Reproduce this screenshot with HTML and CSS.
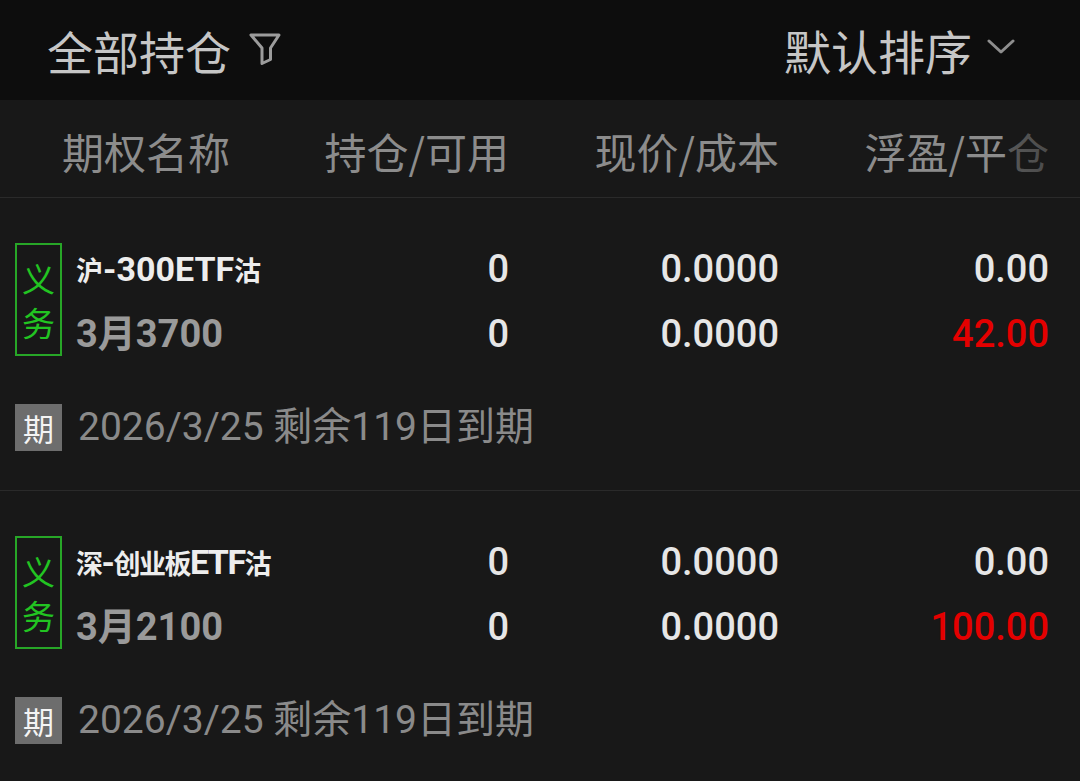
FILE: index.html
```html
<!DOCTYPE html>
<html lang="zh-CN">
<head>
<meta charset="utf-8">
<title>全部持仓</title>
<link rel="stylesheet" href="styles.css">
</head>
<body>
<header class="topbar">
  <div class="filter">
    <span class="title">全部持仓</span>
    <svg class="funnel" width="34" height="34" viewBox="10 10 34 34"><path d="M13 14 H41 L32.5 27 V38.5 L24 42.5 V27 Z" fill="none" stroke="#9c9c9c" stroke-width="3" stroke-linejoin="round"/></svg>
  </div>
  <div class="sort">
    <span class="title">默认排序</span>
    <svg class="chev" width="28" height="20" viewBox="0 0 28 20"><path d="M2 4 L14 15 L26 4" fill="none" stroke="#8e8e8e" stroke-width="3" stroke-linecap="round" stroke-linejoin="round"/></svg>
  </div>
</header>

<div class="colhead">
  <div class="ch first">期权名称</div>
  <div class="ch">持仓/可用</div>
  <div class="ch">现价/成本</div>
  <div class="ch">浮盈/平仓</div>
  <div class="fade"></div>
</div>

<section class="pos">
  <div class="main">
    <div class="namecell">
      <div class="tag"><span>义</span><span>务</span></div>
      <div class="names">
        <div class="n1"><span class="cj">沪</span>-300ETF<span class="cj">沽</span></div>
        <div class="n2">3月3700</div>
      </div>
    </div>
    <div class="num">0</div>
    <div class="num">0.0000</div>
    <div class="num">0.00</div>
    <div class="num">0</div>
    <div class="num">0.0000</div>
    <div class="num red">42.00</div>
  </div>
  <div class="expiry">
    <span class="qi">期</span>
    <span class="exp-text">2026/3/25 剩余119日到期</span>
  </div>
</section>

<section class="pos">
  <div class="main">
    <div class="namecell">
      <div class="tag"><span>义</span><span>务</span></div>
      <div class="names">
        <div class="n1 tight"><span class="cj">深</span>-<span class="cj">创业板</span>ETF<span class="cj">沽</span></div>
        <div class="n2">3月2100</div>
      </div>
    </div>
    <div class="num">0</div>
    <div class="num">0.0000</div>
    <div class="num">0.00</div>
    <div class="num">0</div>
    <div class="num">0.0000</div>
    <div class="num red">100.00</div>
  </div>
  <div class="expiry">
    <span class="qi">期</span>
    <span class="exp-text">2026/3/25 剩余119日到期</span>
  </div>
</section>
</body>
</html>
```

FILE: styles.css
```css
html, body {
  margin: 0;
  padding: 0;
  background: #181818;
  height: 781px;
  overflow: hidden;
  font-family: Roboto, "Noto Sans CJK SC", sans-serif;
}

.topbar {
  height: 100px;
  background: #0d0d0d;
  display: flex;
  align-items: center;
  justify-content: space-between;
  padding: 0 65px 0 47px;
  box-sizing: border-box;
}

.filter, .sort {
  display: flex;
  align-items: center;
}

.title {
  font-family: "Noto Sans CJK SC", sans-serif;
  font-size: 46px;
  line-height: 60px;
  color: #c6c6c6;
}

.sort .title {
  font-size: 47px;
}

.funnel {
  margin-left: 17px;
  margin-top: -4px;
}

.chev {
  margin-left: 15px;
  margin-top: -6px;
}

.colhead {
  position: relative;
  height: 97px;
  display: grid;
  grid-template-columns: 224px 270px 270px 270px;
  padding: 0 31px 0 15px;
  align-items: center;
  border-bottom: 1px solid #2a2a2a;
}

.ch {
  font-family: "Noto Sans CJK SC", sans-serif;
  font-size: 42px;
  line-height: 50px;
  color: #8c8c8c;
  text-align: right;
  white-space: nowrap;
  margin-top: 4px;
}

.ch.first {
  text-align: left;
  padding-left: 47px;
}

.fade {
  position: absolute;
  top: 0;
  right: 0;
  width: 72px;
  height: 100%;
  background: linear-gradient(to right, rgba(24,24,24,0.45), rgba(24,24,24,0.65));
}

.pos {
  padding: 45px 31px 0 15px;
  height: 293px;
  box-sizing: border-box;
  border-bottom: 1px solid #2a2a2a;
}

.main {
  display: grid;
  grid-template-columns: 224px 270px 270px 270px;
  grid-template-rows: 65px 65px;
}

.namecell {
  grid-row: span 2;
  display: flex;
  align-items: flex-start;
  white-space: nowrap;
}

.tag {
  flex-shrink: 0;
  width: 47px;
  height: 113px;
  box-sizing: border-box;
  border: 2px solid #27a627;
  display: flex;
  flex-direction: column;
  align-items: center;
  justify-content: center;
  gap: 8px;
  font-family: "Noto Sans CJK SC", sans-serif;
  font-size: 33px;
  line-height: 36px;
  color: #22c422;
}

.names {
  flex-shrink: 0;
  margin-left: 14px;
}

.n1, .n2 {
  height: 65px;
  line-height: 52px;
  font-weight: 700;
}

.n1 {
  font-size: 34px;
  color: #ededed;
}

.n1 .cj {
  font-size: 27px;
}

.n1.tight {
  letter-spacing: -1.5px;
}

.n2 {
  font-size: 38px;
  color: #9a9a9a;
}

.num {
  font-size: 38px;
  line-height: 52px;
  font-weight: 500;
  color: #e6e6e6;
  text-align: right;
}

.num.red {
  color: #e40000;
}

.expiry {
  margin-top: 31px;
  display: flex;
  align-items: center;
}

.qi {
  flex-shrink: 0;
  width: 47px;
  height: 47px;
  background: #6d6d6d;
  color: #f4f4f4;
  font-family: "Noto Sans CJK SC", sans-serif;
  font-size: 31px;
  line-height: 47px;
  text-align: center;
}

.exp-text {
  margin-left: 16px;
  font-family: Roboto, "Noto Sans CJK SC", sans-serif;
  font-size: 39px;
  line-height: 47px;
  color: #8a8a8a;
  white-space: nowrap;
}
```
